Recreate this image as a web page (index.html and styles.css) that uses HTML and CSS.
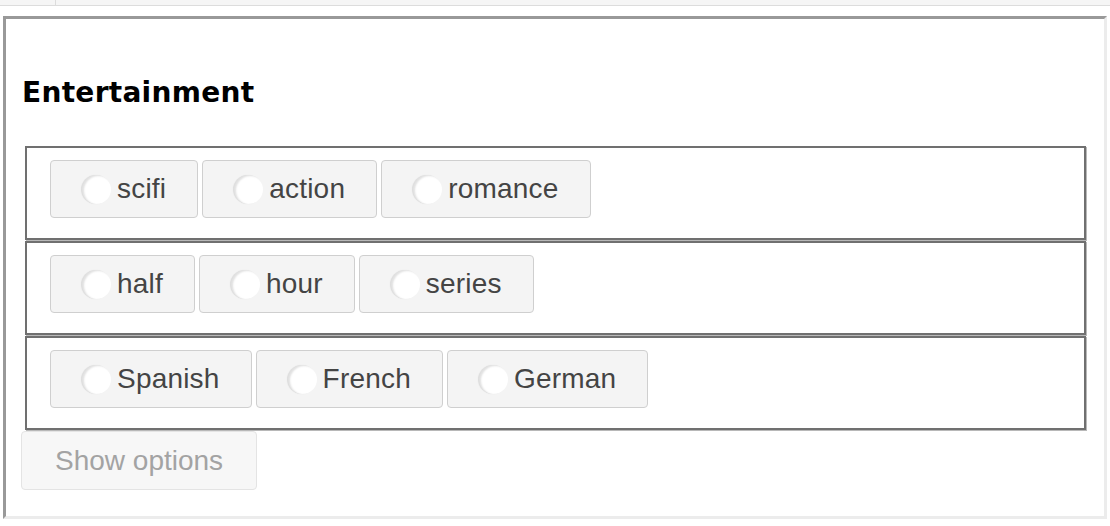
FILE: index.html
```html
<!DOCTYPE html>
<html lang="en">
<head>
<meta charset="utf-8">
<title>Entertainment</title>
<link rel="stylesheet" href="styles.css">
</head>
<body>
<div class="topbar"><div class="tab"></div></div>
<div class="panel">
  <h2 class="title">Entertainment</h2>
  <div class="group">
    <label class="opt"><span class="radio"></span><span>scifi</span></label>
    <label class="opt"><span class="radio"></span><span>action</span></label>
    <label class="opt"><span class="radio"></span><span>romance</span></label>
  </div>
  <div class="group">
    <label class="opt"><span class="radio"></span><span>half</span></label>
    <label class="opt"><span class="radio"></span><span>hour</span></label>
    <label class="opt"><span class="radio"></span><span>series</span></label>
  </div>
  <div class="group">
    <label class="opt"><span class="radio"></span><span>Spanish</span></label>
    <label class="opt"><span class="radio"></span><span>French</span></label>
    <label class="opt"><span class="radio"></span><span>German</span></label>
  </div>
  <div class="actions"><button class="show" disabled>Show options</button></div>
</div>
</body>
</html>
```
FILE: styles.css
```css
html, body {
  margin: 0;
  padding: 0;
  background: #fff;
}
body {
  font-family: "Liberation Sans", Arial, sans-serif;
}
.topbar {
  height: 5px;
  background: #f5f5f5;
  border-bottom: 1px solid #dcdcdc;
  display: flex;
}
.tab {
  width: 55px;
  border-right: 1px solid #dcdcdc;
}
.panel {
  margin: 10px 3px 0 3px;
  height: 503px;
  box-sizing: border-box;
  border-width: 3px;
  border-style: solid;
  border-color: #999 #ececec #ececec #999;
  padding: 57px 18px 0 15px;
}
.title {
  margin: 0 0 37px 1px;
  font-family: "DejaVu Sans", Verdana, sans-serif;
  font-weight: bold;
  font-size: 28px;
  line-height: 33px;
  letter-spacing: 0.3px;
  color: #000;
}
.group {
  margin: 0 0 1px 4px;
  height: 94px;
  box-sizing: border-box;
  border: 2px solid #707070;
  box-shadow: 1px 1px 0 #b8b8b8;
  padding: 12px 0 0 23px;
  display: flex;
  align-items: flex-start;
  gap: 4px;
}
.opt {
  height: 58px;
  box-sizing: border-box;
  display: flex;
  align-items: center;
  gap: 6px;
  padding: 0 31px;
  border: 1px solid #cfcfcf;
  border-radius: 4px;
  background: #f4f4f4;
  color: #444;
  font-size: 28px;
  letter-spacing: 0.2px;
}
.radio {
  width: 29px;
  height: 29px;
  border-radius: 50%;
  background: #fff;
  box-shadow: inset 2px 1px 2px rgba(0, 0, 0, 0.12), -1px 0 1px rgba(0, 0, 0, 0.1);
  flex: none;
}
.actions {
  display: flex;
}
.show {
  height: 59px;
  padding: 0 33px;
  border: 1px solid #e4e4e4;
  border-radius: 4px;
  background: #f7f7f7;
  color: #a3a3a3;
  font-family: "Liberation Sans", Arial, sans-serif;
  font-size: 28px;
}
```
